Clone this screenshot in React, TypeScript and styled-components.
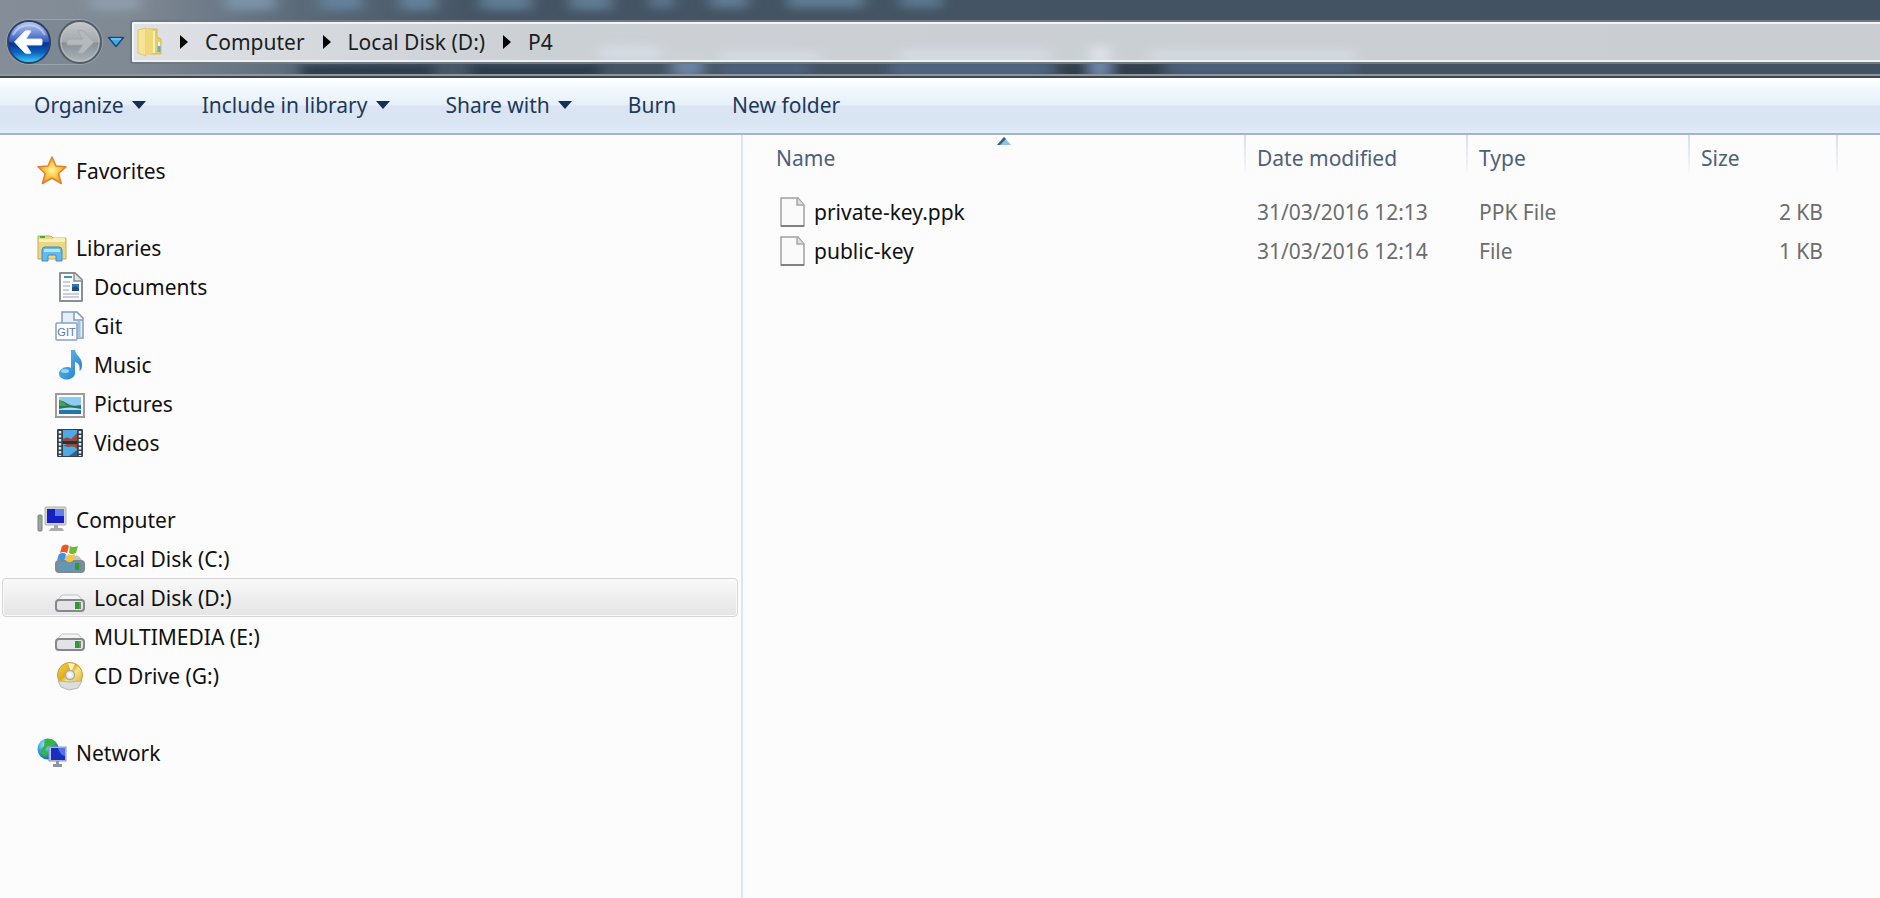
import React from "react";
import styled, { createGlobalStyle, css } from "styled-components";

const GlobalStyle = createGlobalStyle`
  * { box-sizing: border-box; }
  body {
    margin: 0;
    background: #fcfcfc;
    font-family: "Noto Sans", "Open Sans", sans-serif;
    font-size: 21px;
    line-height: 30px;
    color: #111;
  }
  button {
    margin: 0;
    padding: 0;
    border: 0;
    background: none;
    font: inherit;
    color: inherit;
    cursor: pointer;
  }
`;

const Window = styled.div`
  display: flex;
  flex-direction: column;
  min-height: 100vh;
`;

/* ---------- Glass header with navigation and address bar ---------- */

const Glass = styled.header`
  position: relative;
  display: flex;
  align-items: center;
  height: 78px;
  padding: 8px 0 0 7px;
  overflow: hidden;
  background: linear-gradient(90deg, #858e98 0, #7f8994 130px, #5b6a79 300px, #445464 480px, #425262 100%);
  border-bottom: 2px solid #3b474f;
  box-shadow: inset 0 -2px 0 #8d979d;
`;

const Backdrop = styled.svg`
  position: absolute;
  top: 0;
  left: 0;
  pointer-events: none;
`;

const HistoryButtons = styled.div`
  position: relative;
  display: flex;
  gap: 7px;
  height: 44px;
  border-radius: 22px;
  background: rgba(120, 132, 144, 0.5);
  box-shadow: 0 0 0 1px rgba(190, 198, 206, 0.4);
`;

const RoundButton = styled.button`
  display: block;
  width: 44px;
  height: 44px;
  border-radius: 50%;

  svg { display: block; }
`;

const RecentButton = styled.button`
  position: relative;
  display: flex;
  align-items: center;
  justify-content: center;
  width: 28px;
  height: 44px;
`;

const AddressBar = styled.nav`
  position: relative;
  display: flex;
  align-items: center;
  flex: 1;
  height: 44px;
  padding-left: 4px;
  border: 2px solid #707a83;
  border-right: 0;
  border-radius: 3px 0 0 3px;
  color: #1c1e21;
  background: linear-gradient(90deg, rgba(226, 229, 234, 0.96) 0, rgba(212, 216, 220, 0.94) 400px, rgba(212, 215, 219, 0.93) 100%);
  box-shadow: inset 2px 2px 0 #f2f3f5, inset 0 -2px 0 #f0f1f3;
`;

const Crumb = styled.button`
  padding: 0 18px 0 17px;
  white-space: nowrap;
`;

const FolderSlot = styled.span`
  display: flex;
  width: 30px;
  margin-right: 14px;
`;

/* ---------- Command bar ---------- */

const CommandBar = styled.div`
  display: flex;
  align-items: center;
  gap: 56px;
  height: 57px;
  padding: 0 34px 2px;
  color: #1e395b;
  background: linear-gradient(#ffffff 0, #f3f8fe 10px, #e6f0fa 27px, #dae4f2 28px, #dae6f4 49px, #e2ecfa 54px);
  border-bottom: 2px solid #a5b3c9;
`;

const Command = styled.button`
  display: flex;
  align-items: center;
  gap: 8px;
  white-space: nowrap;
`;

/* ---------- Body ---------- */

const Body = styled.div`
  display: grid;
  grid-template-columns: minmax(300px, 743fr) minmax(600px, 1137fr);
  flex: 1;
`;

const NavigationPane = styled.nav`
  padding: 16px 3px 40px 2px;
  border-right: 2px solid #d9e5f1;
`;

const TreeList = styled.ul`
  margin: 0 0 38px;
  padding: 0;
  list-style: none;
`;

const TreeItem = styled.a<{ $child?: boolean; $selected?: boolean }>`
  display: flex;
  align-items: center;
  gap: 9px;
  height: 39px;
  padding: 0 0 0 ${(p) => (p.$child ? 52 : 34)}px;
  border: 1px solid transparent;
  border-radius: 4px;
  color: #111;
  text-decoration: none;
  white-space: nowrap;

  svg { flex: none; }

  ${(p) =>
    p.$selected &&
    css`
      border-color: #d5d5d5;
      background: linear-gradient(#f9f9f9, #e4e4e4);
      box-shadow: inset 0 0 0 1px #fafafa;
    `}
`;

const FilePane = styled.main`
  padding-left: 20px;
`;

const FileTable = styled.table`
  width: 100%;
  border-collapse: collapse;
  table-layout: fixed;
`;

const Column = styled.col<{ $width?: number }>`
  width: ${(p) => (p.$width ? `${p.$width}px` : "auto")};
`;

const HeaderCell = styled.th<{ $divided?: boolean }>`
  position: relative;
  height: 57px;
  padding: 0 0 11px 13px;
  font-weight: 400;
  text-align: left;
  color: #4c607a;
  ${(p) =>
    p.$divided &&
    css`
      background: linear-gradient(#d3e0ec, #eef3f8 75%, #fcfcfc) left top / 2px 40px no-repeat;
    `}
`;

const SortMark = styled.svg`
  position: absolute;
  top: 2px;
  left: calc(50% - 7px);
`;

const Cell = styled.td<{ $align?: "right" }>`
  height: 39px;
  padding: 0 13px;
  text-align: ${(p) => p.$align || "left"};
  color: #6d6d6d;
  white-space: nowrap;
`;

const FileName = styled.a`
  display: flex;
  align-items: center;
  gap: 8px;
  padding-left: 3px;
  color: #111;
  text-decoration: none;
`;

/* ---------- Icons ---------- */

const BackIcon = () => (
  <svg width="44" height="44" viewBox="0 0 44 44" aria-hidden="true">
    <defs>
      <linearGradient id="backTop" x1="0" y1="0" x2="0" y2="1">
        <stop offset="0" stopColor="#b9c8ee" />
        <stop offset="0.3" stopColor="#6d8bd8" />
        <stop offset="0.5" stopColor="#2e55b8" />
        <stop offset="0.52" stopColor="#07308f" />
        <stop offset="0.75" stopColor="#0b64c4" />
        <stop offset="1" stopColor="#3fd4fb" />
      </linearGradient>
    </defs>
    <circle cx="22" cy="22" r="21" fill="url(#backTop)" stroke="#2b4268" strokeWidth="2" />
    <path d="M6 15a18 18 0 0 1 32 0" fill="none" stroke="#e2e9fa" strokeOpacity="0.5" strokeWidth="2" />
    <path d="M7.500 22 18 11q4-1 6 0l-5 8h15q1 0 1 1v4q0 1-1 1H19l5 8q-2 1-6 0z" fill="#fff" stroke="#dfe8f6" strokeLinejoin="round" />
  </svg>
);

const ForwardIcon = () => (
  <svg width="44" height="44" viewBox="0 0 44 44" aria-hidden="true">
    <defs>
      <linearGradient id="forwardFill" x1="0" y1="0" x2="0" y2="1">
        <stop offset="0" stopColor="#c3c8cb" />
        <stop offset="0.5" stopColor="#a3a9ae" />
        <stop offset="0.52" stopColor="#888f95" />
        <stop offset="1" stopColor="#aeb5ba" />
      </linearGradient>
    </defs>
    <circle cx="22" cy="22" r="21" fill="url(#forwardFill)" stroke="#545d66" strokeWidth="2" />
    <circle cx="22" cy="22" r="19" fill="none" stroke="#c5cacd" strokeOpacity="0.7" />
    <path d="M36 22 25.500 11q-4-1-6 0l5 8H10q-1 0-1 1v4q0 1 1 1h14.500l-5 8q2 1 6 0z" fill="#b3b9bc" stroke="#a0a7ab" strokeLinejoin="round" />
  </svg>
);

const RecentIcon = () => (
  <svg width="18" height="12" viewBox="0 0 18 12" aria-hidden="true">
    <path d="M1.500 1.500h15L9 10.500z" fill="#3bb0e8" stroke="#1c4a78" strokeWidth="1.500" strokeLinejoin="round" />
    <path d="M4 3h10" stroke="#8adcfa" />
  </svg>
);

const OpenFolderIcon = () => (
  <svg width="30" height="30" viewBox="0 0 30 30" aria-hidden="true">
    <path d="M10 2h11v8l4 2v15H10z" fill="#e8cd62" stroke="#d9bb55" />
    <path d="M2 3 10 1v28l-8-3z" fill="#f5e496" stroke="#e0c768" />
    <path d="M10 1l7 2v23l-7 3z" fill="#efd879" />
    <path d="M18 4v22" stroke="#fbf0b8" strokeWidth="2" />
    <path d="M23 19v6" stroke="#5faedb" strokeWidth="3" />
    <path d="M23 15v4" stroke="#f7f7ef" strokeWidth="2" />
  </svg>
);

const CrumbArrow = () => (
  <svg width="8" height="14" viewBox="0 0 8 14" aria-hidden="true">
    <path d="M0 0l8 7-8 7z" fill="#050505" />
  </svg>
);

const DownArrow = () => (
  <svg width="14" height="8" viewBox="0 0 14 8" aria-hidden="true">
    <path d="M0 0h14L7 8z" fill="#152f55" />
  </svg>
);

const Icon = ({ children }: { children: React.ReactNode }) => (
  <svg width="30" height="30" viewBox="0 0 30 30" aria-hidden="true">
    {children}
  </svg>
);

const StarIcon = () => (
  <Icon>
    <defs>
      <radialGradient id="star" cx="0.5" cy="0.5" r="0.55">
        <stop offset="0" stopColor="#fff3a0" />
        <stop offset="0.5" stopColor="#fcc93a" />
        <stop offset="1" stopColor="#f6941d" />
      </radialGradient>
    </defs>
    <path d="M15 1l4 9 10 .8-7.500 6.700 2.800 10L15 22 5.500 27.500l2.700-10L1 10.800l10-.8z" fill="url(#star)" stroke="#df7f35" strokeWidth="1.500" strokeLinejoin="round" />
  </Icon>
);

const LibrariesIcon = () => (
  <Icon>
    <path d="M1 3h13l2 2h13v21H1z" fill="#ecd882" stroke="#c3ab5d" />
    <path d="M2 6h13l2-1h11v4H2z" fill="#f9efb8" />
    <path d="M3 3h5v2H3z" fill="#3eae45" />
    <path d="M5 28V17q0-3 3-3h14q3 0 3 3v11h-6v-5q0-1-1-1h-6q-1 0-1 1v5z" fill="#63b9ea" stroke="#3a8cc8" />
    <path d="M7 17q0-1 2-1h12q2 0 2 1v2H7z" fill="#b3e2fa" />
  </Icon>
);

const DocumentIcon = () => (
  <Icon>
    <path d="M5 1h15l7 7v21H5z" fill="#fbfcfd" stroke="#8b8f94" strokeWidth="2" strokeLinejoin="round" />
    <path d="M19 1v8h8" fill="#e4e7ea" stroke="#8b8f94" strokeWidth="1.500" />
    <path d="M9 5h8" stroke="#3f9a98" strokeWidth="2" />
    <path d="M8 10h7M8 14h7M8 18h6M8 22h16M8 25h16" stroke="#9b9fc4" />
    <path d="M17 12h7v7h-7z" fill="#3577b9" />
    <path d="M17 16l3-2 4 2v3h-7z" fill="#1d4d83" />
  </Icon>
);

const GitIcon = () => (
  <Icon>
    <path d="M7 1h15l6 6v20H7z" fill="#e6eef7" stroke="#7f9dba" strokeWidth="1.500" />
    <path d="M19 1v8h9" fill="#fff" stroke="#7f9dba" strokeWidth="1.500" />
    <path d="M24 10v17" stroke="#a8c1db" strokeWidth="3" />
    <rect x="1" y="12" width="21" height="17" rx="1" fill="#fafcff" stroke="#86a2bf" strokeWidth="1.500" />
    <text x="11.500" y="24.500" textAnchor="middle" fontFamily="Liberation Sans, sans-serif" fontSize="11" fill="#54789f">GIT</text>
  </Icon>
);

const MusicIcon = () => (
  <Icon>
    <defs>
      <linearGradient id="note" x1="0" y1="0" x2="1" y2="1">
        <stop offset="0" stopColor="#6cc4f4" />
        <stop offset="1" stopColor="#1c78c4" />
      </linearGradient>
    </defs>
    <path d="M16 0h4c1 6 8 8 7 16-.3 3-1 4-2.500 5 .5-6-1-8-4.500-9v11c0 4-4 6.500-8.500 6.500S4 27 4 23.500 8 17 12 17c2 0 3 .3 4 1z" fill="url(#note)" />
    <ellipse cx="10" cy="21" rx="4" ry="2" fill="#8ed7fa" />
  </Icon>
);

const PictureIcon = () => (
  <Icon>
    <rect x="1" y="5" width="28" height="23" fill="#fafafa" stroke="#9c9c9c" strokeWidth="2" />
    <path d="M4 8h22v17H4z" fill="#8ccbf2" />
    <path d="M4 11q5 1 9 4t13 1v4H4z" fill="#2b7558" />
    <path d="M4 11q5 2 8 6H4z" fill="#49a049" />
    <path d="M4 19h22v6H4z" fill="#2474ae" />
    <path d="M4 20q11-3 22 0v1H4z" fill="#aee0dd" />
  </Icon>
);

const VideoIcon = () => (
  <Icon>
    <rect x="2" y="1" width="26" height="28" rx="1" fill="#34434b" />
    <path d="M8 2h14v12H8zM8 16h14v12H8z" fill="#4fa9e4" />
    <path d="M8 11q4-3 8 0l6-6v9H8zM8 18l4-2h10v5q-3-4-8-2z" fill="#98493c" />
    <path d="M8 13h14v3H8z" fill="#27333a" />
    <path d="M14 28l8-6v6z" fill="#3a5f87" />
    <path d="M5 3v25M25 3v25" stroke="#e4f0ee" strokeWidth="2.500" strokeDasharray="2.500 1.500" />
  </Icon>
);

const ComputerIcon = () => (
  <Icon>
    <rect x="8" y="2" width="21" height="18" rx="1" fill="#d2d4d2" stroke="#b0b2b0" />
    <rect x="10" y="4" width="17" height="14" fill="#1420c4" />
    <path d="M18 4h9v7h-9z" fill="#5f80e8" />
    <path d="M17 20h4v3h4l2 3H12l2-3h3z" fill="#a9acab" />
    <rect x="1" y="10" width="4" height="16" rx="1" fill="#9fa3a2" stroke="#7a7e7e" />
    <path d="M2 13h3" stroke="#61c52f" strokeWidth="3" />
  </Icon>
);

const DriveBody = ({ fill, light }: { fill: string; light: string }) => (
  <>
    <path d="M6 13q1-1 3-1h12q2 0 3 1l5 6H1z" fill={light} stroke="#c0c0c0" />
    <rect x="1" y="17" width="28" height="11" rx="3" fill={fill} stroke="#85878a" strokeWidth="2" />
    <path d="M20 19h4v7h-4z" fill="#2f9a2d" />
    <path d="M24 19h2v7h-2z" fill="#7b8878" />
  </>
);

const DriveIcon = () => (
  <Icon>
    <DriveBody fill="#e2e3e6" light="#f4f4f4" />
  </Icon>
);

const SystemDriveIcon = () => (
  <Icon>
    <DriveBody fill="#6596b4" light="#bfc4c8" />
    <path d="M7 2q4-3 7 0l-2 7q-4-2-7 0z" fill="#e8572a" />
    <path d="M15 2q3 2 8 0l-2 7q-5 2-7 0z" fill="#6dbb38" />
    <path d="M4 10q4-2 7 0l-2 7q-4-2-7-1z" fill="#3d93dd" />
    <path d="M13 10q3 2 7 0l-2 7q-4 2-7 0z" fill="#fbc52d" />
  </Icon>
);

const DiscIcon = () => (
  <Icon>
    <defs>
      <linearGradient id="disc" x1="0" y1="0" x2="1" y2="1">
        <stop offset="0" stopColor="#f6d45a" />
        <stop offset="0.4" stopColor="#e2ad1b" />
        <stop offset="0.55" stopColor="#f9e48a" />
        <stop offset="1" stopColor="#d9a41c" />
      </linearGradient>
    </defs>
    <circle cx="15" cy="14" r="12.500" fill="url(#disc)" stroke="#c79b2c" />
    <path d="M13 2l3 9 4-8z" fill="#fdf3c0" />
    <path d="M3 20l12 1 12-1-4 7-9 2-8-3z" fill="#dcdedd" stroke="#b4b7b6" />
    <circle cx="15" cy="14" r="4.500" fill="#e9ebea" stroke="#a9abb0" strokeWidth="1.500" />
    <circle cx="15" cy="14" r="1.800" fill="#fff" />
  </Icon>
);

const NetworkIcon = () => (
  <Icon>
    <defs>
      <radialGradient id="globe" cx="0.35" cy="0.3" r="0.8">
        <stop offset="0" stopColor="#9fe4ff" />
        <stop offset="0.5" stopColor="#2f9be0" />
        <stop offset="1" stopColor="#1456a6" />
      </radialGradient>
    </defs>
    <circle cx="11" cy="11" r="10.500" fill="url(#globe)" />
    <path d="M8 1q7-1 11 4l-3 4-5-1-3 4 3 3-3 4q-4-2-4-7l3-4z" fill="#35b53b" />
    <rect x="12" y="9" width="17" height="14" fill="#c3c8dc" stroke="#8f95ae" />
    <rect x="14" y="10" width="14" height="12" fill="#1b2cc0" />
    <path d="M21 10h7v8q-5-1-7-8z" fill="#5573df" />
    <path d="M19 23h3v3h3v3h-9v-3h3z" fill="#8b93a4" />
  </Icon>
);

const FileIcon = () => (
  <svg width="27" height="30" viewBox="0 0 27 30" aria-hidden="true">
    <path d="M2 1h17l6 7v21H2z" fill="#fafafa" stroke="#a0a0a0" strokeWidth="1.500" />
    <path d="M18 1v7h7" fill="#dedede" stroke="#a8a8a8" strokeWidth="1.500" />
    <path d="M2 29h23" stroke="#808080" strokeWidth="2" />
  </svg>
);

/* ---------- Data ---------- */

const crumbs = ["Computer", "Local Disk (D:)", "P4"];

const commands = [
  { label: "Organize", menu: true },
  { label: "Include in library", menu: true },
  { label: "Share with", menu: true },
  { label: "Burn", menu: false },
  { label: "New folder", menu: false },
];

type Node = { label: string; icon: React.ReactNode; selected?: boolean };

const tree: { root: Node; items: Node[] }[] = [
  { root: { label: "Favorites", icon: <StarIcon /> }, items: [] },
  {
    root: { label: "Libraries", icon: <LibrariesIcon /> },
    items: [
      { label: "Documents", icon: <DocumentIcon /> },
      { label: "Git", icon: <GitIcon /> },
      { label: "Music", icon: <MusicIcon /> },
      { label: "Pictures", icon: <PictureIcon /> },
      { label: "Videos", icon: <VideoIcon /> },
    ],
  },
  {
    root: { label: "Computer", icon: <ComputerIcon /> },
    items: [
      { label: "Local Disk (C:)", icon: <SystemDriveIcon /> },
      { label: "Local Disk (D:)", icon: <DriveIcon />, selected: true },
      { label: "MULTIMEDIA (E:)", icon: <DriveIcon /> },
      { label: "CD Drive (G:)", icon: <DiscIcon /> },
    ],
  },
  { root: { label: "Network", icon: <NetworkIcon /> }, items: [] },
];

const files = [
  { name: "private-key.ppk", modified: "31/03/2016 12:13", type: "PPK File", size: "2 KB" },
  { name: "public-key", modified: "31/03/2016 12:14", type: "File", size: "1 KB" },
];

/* Soft shapes of the windows behind the glass: x, y, width, height, colour */
type Blob = [number, number, number, number, string];

const blobs: Blob[] = [
  [90, -6, 50, 16, "#8f9dab"],
  [225, -8, 50, 18, "#7b93a8"],
  [320, -8, 42, 18, "#64819a"],
  [400, -8, 36, 18, "#64819a"],
  [480, -8, 52, 18, "#5f7c93"],
  [570, -8, 42, 18, "#5f7c93"],
  [650, -8, 24, 16, "#5a778e"],
  [710, -8, 38, 16, "#5f7c93"],
  [788, -8, 76, 16, "#5f7c93"],
  [900, -8, 42, 16, "#5a778e"],
  [300, 64, 135, 14, "#2b3b4b"],
  [470, 64, 130, 14, "#2b3b4b"],
  [672, 56, 32, 22, "#6a82a3"],
  [720, 62, 90, 14, "#4c627c"],
  [890, 62, 160, 14, "#506885"],
  [1060, 62, 30, 16, "#313e4b"],
  [1090, 54, 20, 24, "#7189ad"],
  [1112, 62, 50, 16, "#313e4b"],
  [1170, 62, 185, 10, "#4d6581"],
];

const barGlow: Blob[] = [
  [600, 46, 60, 14, "#e0e8f4"],
  [720, 52, 100, 10, "#e0e8f4"],
  [900, 50, 150, 12, "#e0e8f4"],
  [1090, 46, 20, 16, "#f0f5fc"],
  [1150, 50, 205, 12, "#dde5f1"],
];

const SoftShapes = ({ shapes }: { shapes: Blob[] }) => (
  <g filter="url(#soft)">
    {shapes.map(([x, y, w, h, fill]) => (
      <rect key={`${x},${y}`} x={x} y={y} width={w} height={h} fill={fill} />
    ))}
  </g>
);

const App = () => (
  <Window>
    <GlobalStyle />
    <Glass>
      <Backdrop width="100%" height="74" aria-hidden="true">
        <defs>
          <filter id="soft" filterUnits="userSpaceOnUse" x="0" y="-30" width="1500" height="130">
            <feGaussianBlur stdDeviation="7 4" />
          </filter>
        </defs>
        <SoftShapes shapes={blobs} />
      </Backdrop>
      <HistoryButtons>
        <RoundButton aria-label="Back"><BackIcon /></RoundButton>
        <RoundButton aria-label="Forward"><ForwardIcon /></RoundButton>
      </HistoryButtons>
      <RecentButton aria-label="Recent locations"><RecentIcon /></RecentButton>
      <AddressBar aria-label="Address">
        <FolderSlot><OpenFolderIcon /></FolderSlot>
        {crumbs.map((crumb) => (
          <React.Fragment key={crumb}>
            <CrumbArrow />
            <Crumb>{crumb}</Crumb>
          </React.Fragment>
        ))}
      </AddressBar>
      <Backdrop width="100%" height="60" opacity="0.5" aria-hidden="true">
        <SoftShapes shapes={barGlow} />
      </Backdrop>
    </Glass>
    <CommandBar role="toolbar">
      {commands.map(({ label, menu }) => (
        <Command key={label}>
          {label}
          {menu && <DownArrow />}
        </Command>
      ))}
    </CommandBar>
    <Body>
      <NavigationPane aria-label="Folders">
        {tree.map(({ root, items }) => (
          <TreeList key={root.label}>
            <li>
              <TreeItem href="#">{root.icon}{root.label}</TreeItem>
            </li>
            {items.map(({ label, icon, selected }) => (
              <li key={label}>
                <TreeItem href="#" $child $selected={selected}>{icon}{label}</TreeItem>
              </li>
            ))}
          </TreeList>
        ))}
      </NavigationPane>
      <FilePane>
        <FileTable>
          <colgroup>
            <Column />
            <Column $width={222} />
            <Column $width={222} />
            <Column $width={148} />
            <Column $width={44} />
          </colgroup>
          <thead>
            <tr>
              <HeaderCell scope="col" aria-sort="ascending">
                <button>Name</button>
                <SortMark width="14" height="9" viewBox="0 0 14 9" aria-hidden="true">
                  <path d="M0 8 7 0l7 8z" fill="#8fc3de" />
                  <path d="M0 8 7 0l2 2-6 6z" fill="#36617f" />
                </SortMark>
              </HeaderCell>
              <HeaderCell scope="col" $divided><button>Date modified</button></HeaderCell>
              <HeaderCell scope="col" $divided><button>Type</button></HeaderCell>
              <HeaderCell scope="col" $divided><button>Size</button></HeaderCell>
              <HeaderCell as="td" $divided />
            </tr>
          </thead>
          <tbody>
            {files.map((file) => (
              <tr key={file.name}>
                <Cell><FileName href="#"><FileIcon />{file.name}</FileName></Cell>
                <Cell>{file.modified}</Cell>
                <Cell>{file.type}</Cell>
                <Cell $align="right">{file.size}</Cell>
                <Cell />
              </tr>
            ))}
          </tbody>
        </FileTable>
      </FilePane>
    </Body>
  </Window>
);

export default App;
